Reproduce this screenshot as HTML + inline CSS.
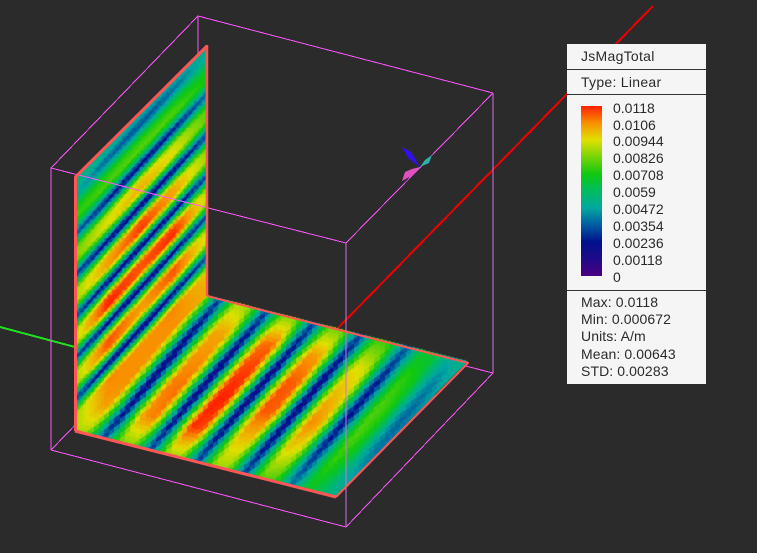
<!DOCTYPE html>
<html>
<head>
<meta charset="utf-8">
<style>
html,body{margin:0;padding:0;background:#2b2b2b;width:757px;height:553px;overflow:hidden}
svg,canvas{position:absolute;left:0;top:0}
text{font-family:"Liberation Sans",Arial,sans-serif;font-size:14px;fill:#2a2a2a}
.h{letter-spacing:.28px}
.s{letter-spacing:.1px}
#bar{position:absolute;left:581px;top:106px;width:21px;height:170px;background:linear-gradient(to bottom,#ff2000 0%,#f89000 10%,#e0e000 20%,#78d408 30%,#10c810 40%,#00bc60 50%,#00a8a0 60%,#005ca0 70%,#00108f 80%,#200a88 90%,#4b0082 100%)}
</style>
</head>
<body>
<svg width="757" height="553" shape-rendering="crispEdges" fill="none">
  <polyline points="653,6 338,328" stroke="#f00000" stroke-width="2"/>
  <polyline points="0,327 75,347" stroke="#20e020" stroke-width="2"/>
  <g stroke="#ff55ff" stroke-width="1">
    <polyline points="198,16 198,298"/>
    <polyline points="198,298 51,450"/>
    <polyline points="198,298 493,373"/>
  </g>
</svg>
<canvas id="c" width="757" height="553"></canvas>
<svg width="757" height="553" fill="none">
  <g shape-rendering="crispEdges" stroke-width="1">
    <g stroke="#ff55ff">
      <polyline points="51,450 51,168 198,16 493,93"/>
      <polyline points="51,168 346,243"/>
      <polyline points="51,450 346,527 493,373"/>
      <polyline points="346,243 493,93"/>
    </g>
    <g stroke="#d070e0">
      <polyline points="346,243 346,527"/>
      <polyline points="493,93 493,373"/>
    </g>
  </g>
  <g stroke="#ff5555" stroke-linejoin="round">
    <polyline points="75.5,431 75.5,177 207,46" stroke-width="3"/>
    <polyline points="207,45 207,296" stroke-width="2.5"/>
    <polyline points="207,296 468,363 336,497" stroke-width="2"/>
    <polyline points="75,431 336,497" stroke-width="3"/>
  </g>
  <polygon points="420,167 408,158 402,147 411,152" fill="#3010f0"/>
  <polygon points="420,167 425,160 432,155 429,163" fill="#30b0a8"/>
  <polygon points="420,167 413,175 402,181 405,172 412,169" fill="#e050c0"/>
  <rect x="567" y="44" width="139" height="340" fill="#f5f5f5"/>
  <g shape-rendering="crispEdges" stroke="#333" stroke-width="1">
    <line x1="567" y1="69.5" x2="706" y2="69.5"/>
    <line x1="567" y1="94.5" x2="706" y2="94.5"/>
    <line x1="567" y1="290.5" x2="706" y2="290.5"/>
  </g>
  <text class="h" x="581" y="61">JsMagTotal</text>
  <text class="h" x="581" y="87">Type: Linear</text>
  <text x="613" y="113">0.0118</text>
  <text x="613" y="130">0.0106</text>
  <text x="613" y="146">0.00944</text>
  <text x="613" y="163">0.00826</text>
  <text x="613" y="180">0.00708</text>
  <text x="613" y="197">0.0059</text>
  <text x="613" y="214">0.00472</text>
  <text x="613" y="231">0.00354</text>
  <text x="613" y="248">0.00236</text>
  <text x="613" y="265">0.00118</text>
  <text x="613" y="282">0</text>
  <text class="s" x="581" y="307">Max: 0.0118</text>
  <text class="s" x="581" y="324">Min: 0.000672</text>
  <text class="s" x="581" y="341">Units: A/m</text>
  <text class="s" x="581" y="359">Mean: 0.00643</text>
  <text class="s" x="581" y="376">STD: 0.00283</text>
</svg>
<div id="bar"></div>
<script>
(function(){
var stops=[[0x4b,0x00,0x82],[0x20,0x0a,0x88],[0x00,0x10,0x8f],[0x00,0x5c,0xa0],[0x00,0xa8,0xa0],[0x00,0xbc,0x60],[0x10,0xc8,0x10],[0x78,0xd4,0x08],[0xe0,0xe0,0x00],[0xf8,0x90,0x00],[0xff,0x20,0x00]];
function cm(f){f=Math.max(0,Math.min(1,f))*10;var i=Math.min(9,Math.floor(f)),k=f-i,a=stops[i],b=stops[i+1];
 return [a[0]+(b[0]-a[0])*k,a[1]+(b[1]-a[1])*k,a[2]+(b[2]-a[2])*k];}
function seg(arr,x){var n=arr.length;if(x<=arr[0])return [0,0];if(x>=arr[n-1])return [n-2,1];
 for(var i=0;i<n-1;i++)if(x<=arr[i+1])return [i,(x-arr[i])/(arr[i+1]-arr[i])];return [n-2,1];}
function bil(T,rows,cols,r,c){var a=seg(rows,r),b=seg(cols,c);
 var p=T[a[0]][b[0]]*(1-b[1])+T[a[0]][b[0]+1]*b[1];
 var q=T[a[0]+1][b[0]]*(1-b[1])+T[a[0]+1][b[0]+1]*b[1];
 return p*(1-a[1])+q*a[1];}
var wr=[.04,.2,.367,.53,.69,.855,1],wc=[0,.25,.5,.75,1];
var WT=[[.74,.9,.9,.9,.86],[.74,.95,.87,.94,.78],[.76,1,.95,1,.77],[.74,.88,.98,.88,.74],[.7,.8,.87,.81,.68],[.62,.65,.67,.67,.62],[.43,.45,.45,.45,.43]];
var fr=[0,.17,.35,.53,.71,.89,1],fc=[0,.2,.4,.6,.8,1];
var FT=[[.74,.88,.9,.9,.88,.84],[.7,.9,.92,.9,.87,.72],[.74,.99,1,.98,.94,.7],[.74,.84,.95,.95,.88,.68],[.68,.82,.9,.84,.78,.62],[.58,.63,.64,.63,.59,.53],[.42,.42,.43,.43,.42,.42]];
var PW=1.2;
function car(p){return Math.min(1,1.08*Math.pow(Math.abs(Math.sin(Math.PI*p)),PW));}
function trough(s,c){var e=2*Math.abs(c-.5),o=Math.max(0,(s-.6)/.4);return .13+.14*e*e+.2*o*o;}
function wallF(u,v){var p=Math.max(-.5,(v-.122-.03*u)/.163),A=bil(WT,wr,wc,v,u),B=Math.min(A,trough(v,u));return B+(A-B)*car(p);}
function floorF(t,w){var p=Math.max(-.5,(w-.107+.055*t)/.18),A=bil(FT,fr,fc,w,t),B=Math.min(A,trough(w,t));return B+(A-B)*car(p);}
/* screen-space triangular mesh so stripes get a sawtooth edge */
function tri(a,b){var i=Math.floor(a),j=Math.floor(b),t=(a-i)+(b-j)>1,o=t?2/3:1/3;return [i+o,j+o];}
var c=document.getElementById('c'),g=c.getContext('2d'),im=g.createImageData(757,553),d=im.data;
function wallAt(sx,sy){var dx=sx-75,dy=sy-431,u=Math.max(0,Math.min(1,dx/132));var v=Math.max(0,Math.min(1,(-dy-136*u)/(254-4*u)));return wallF(u,v);}
function floorAt(sx,sy){var dx=sx-75,dy=sy-431,t=(66*dx-261*dy)/44208,w=(136*dx+132*dy)/44208;return floorF(Math.max(0,Math.min(1,t)),Math.max(0,Math.min(1,w)));}
for(var y=0;y<553;y++)for(var x=0;x<757;x++){
 var px=x+.5,py=y+.5,dx=px-75,dy=py-431,f=null;
 var u=dx/132;
 if(u>=0&&u<=1){var v=(-dy-136*u)/(254-4*u);
  if(v>=0&&v<=1){var cw=3.6,ch=4.4,m=tri(px/cw,py/ch);f=wallAt(m[0]*cw,m[1]*ch);}}
 if(f===null){var t=(66*dx-261*dy)/44208,w=(136*dx+132*dy)/44208;
  if(t>=0&&t<=1&&w>=0&&w<=1){var cx=5.2,cy=4.8,sh=.253,n=tri(px/cx,(py-sh*px)/cy),qx=n[0]*cx,qy=n[1]*cy+sh*qx;f=floorAt(qx,qy);}}
 if(f!==null){var r=cm(f),k=(y*757+x)*4;d[k]=r[0];d[k+1]=r[1];d[k+2]=r[2];d[k+3]=255;}
}
g.putImageData(im,0,0);
})();
</script>
</body>
</html>
